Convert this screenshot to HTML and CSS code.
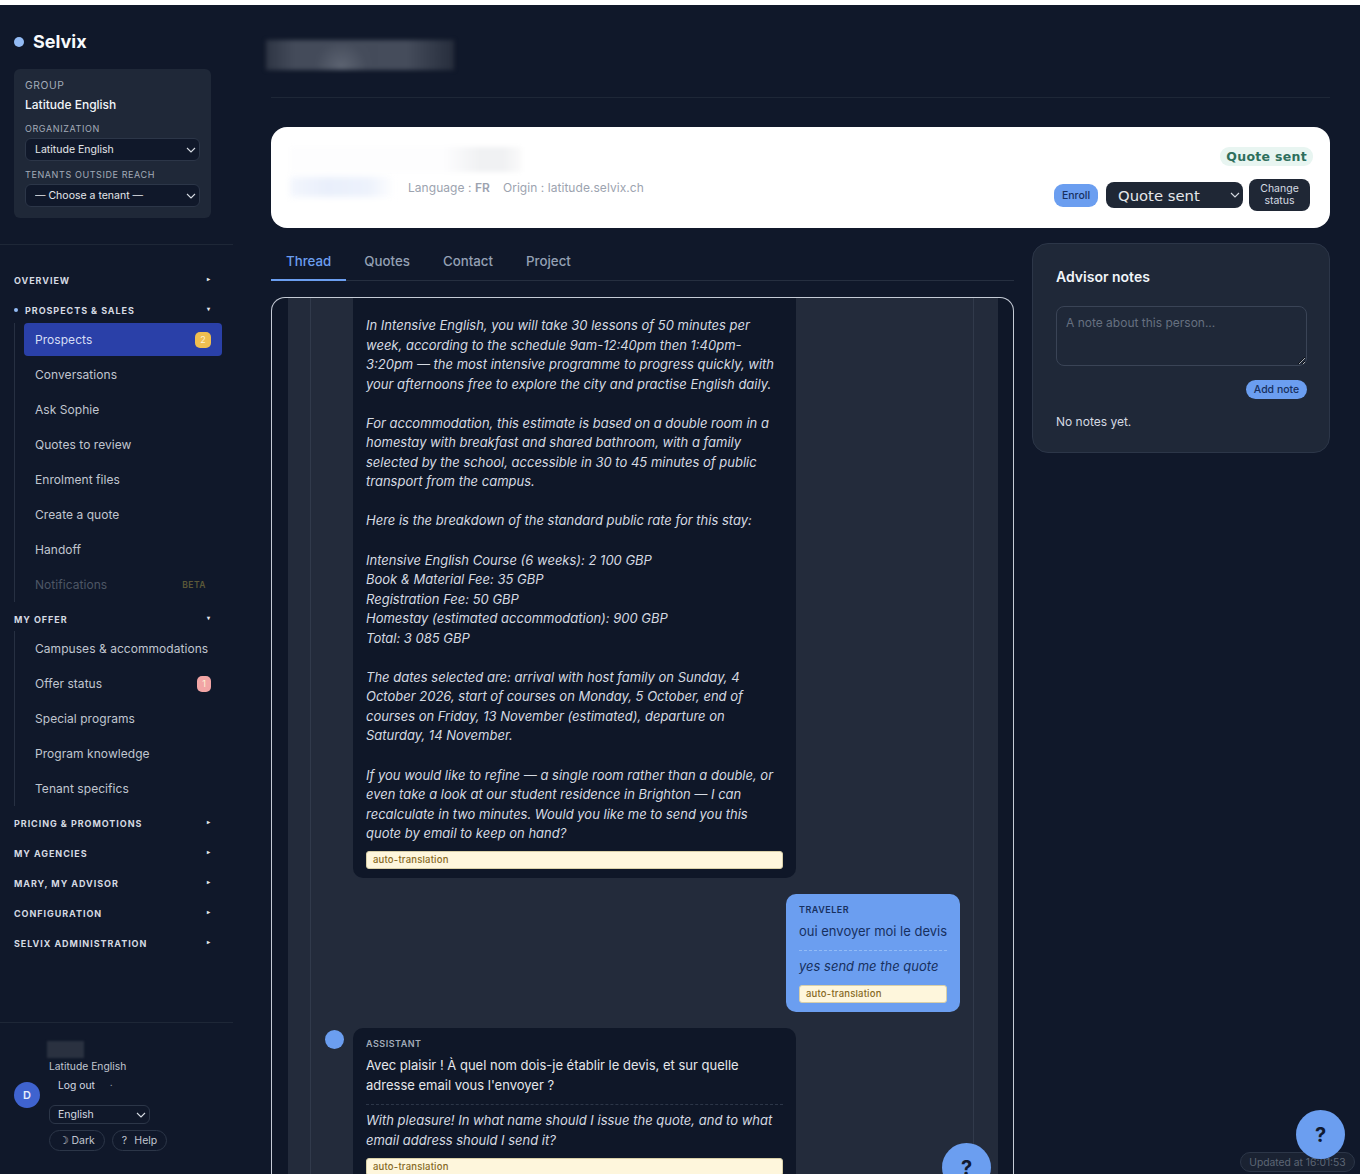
FILE: index.html
```html
<!DOCTYPE html>
<html lang="en">
<head>
    <meta charset="UTF-8">
    <meta name="viewport" content="width=device-width, initial-scale=1.0">
    <title>Selvix</title>
    <link rel="stylesheet" href="styles.css">
</head>
<body>
    <div class="top-strip"></div>
    <div class="app">
        <!-- Sidebar -->
        <aside class="sidebar">
            <div class="brand"><span class="brand-dot"></span>Selvix</div>

            <div class="tenant-card">
                <div class="tenant-label">GROUP</div>
                <div class="tenant-name">Latitude English</div>
                <div class="tenant-label small">ORGANIZATION</div>
                <select class="tenant-select"><option>Latitude English</option></select>
                <div class="tenant-label small">TENANTS OUTSIDE REACH</div>
                <select class="tenant-select"><option>— Choose a tenant —</option></select>
            </div>

            <nav class="nav">
                <div class="nav-head"><span>OVERVIEW</span><span class="caret">▸</span></div>
                <div class="nav-head current"><span class="head-dot"></span><span>PROSPECTS &amp; SALES</span><span class="caret">▾</span></div>
                <div class="nav-group">
                    <a class="nav-item active">Prospects<span class="badge yellow">2</span></a>
                    <a class="nav-item">Conversations</a>
                    <a class="nav-item">Ask Sophie</a>
                    <a class="nav-item">Quotes to review</a>
                    <a class="nav-item">Enrolment files</a>
                    <a class="nav-item">Create a quote</a>
                    <a class="nav-item">Handoff</a>
                    <a class="nav-item muted">Notifications<span class="beta">BETA</span></a>
                </div>
                <div class="nav-head"><span>MY OFFER</span><span class="caret">▾</span></div>
                <div class="nav-group offer">
                    <a class="nav-item">Campuses &amp; accommodations</a>
                    <a class="nav-item">Offer status<span class="badge pink">1</span></a>
                    <a class="nav-item">Special programs</a>
                    <a class="nav-item">Program knowledge</a>
                    <a class="nav-item">Tenant specifics</a>
                </div>
                <div class="nav-head"><span>PRICING &amp; PROMOTIONS</span><span class="caret">▸</span></div>
                <div class="nav-head"><span>MY AGENCIES</span><span class="caret">▸</span></div>
                <div class="nav-head"><span>MARY, MY ADVISOR</span><span class="caret">▸</span></div>
                <div class="nav-head"><span>CONFIGURATION</span><span class="caret">▸</span></div>
                <div class="nav-head"><span>SELVIX ADMINISTRATION</span><span class="caret">▸</span></div>
            </nav>

            <div class="user-box">
                <div class="avatar">D</div>
                <div class="user-info">
                    <div class="blur-name"></div>
                    <div class="user-org">Latitude English</div>
                    <div class="logout">Log out<span class="logout-dot">·</span></div>
                    <select class="lang-select"><option>English</option></select>
                    <div class="user-btns">
                        <button class="pill-btn"><span class="pill-icon">☽</span>Dark</button>
                        <button class="pill-btn"><span class="pill-icon">?</span>Help</button>
                    </div>
                </div>
            </div>
        </aside>

        <!-- Main -->
        <main class="main">
            <div class="page-head"><div class="blur-title"></div></div>

            <section class="contact-card">
                <div class="contact-left">
                    <div class="blur-contact"></div>
                    <div class="contact-meta">
                        <div class="blur-mail"></div>
                        <span>Language : <b>FR</b></span>
                        <span>Origin : latitude.selvix.ch</span>
                    </div>
                </div>
                <div class="contact-right">
                    <span class="status-pill">Quote sent</span>
                    <div class="contact-actions">
                        <button class="btn-enroll">Enroll</button>
                        <select class="status-select"><option>Quote sent</option></select>
                        <button class="btn-change">Change<br>status</button>
                    </div>
                </div>
            </section>

            <div class="columns">
                <div class="left-col">
                    <div class="tabs">
                        <a class="tab active">Thread</a>
                        <a class="tab">Quotes</a>
                        <a class="tab">Contact</a>
                        <a class="tab">Project</a>
                    </div>

                    <div class="thread">
                        <div class="thread-panel">
                            <div class="thread-inner">
                                <div class="msg first">
                                    <div class="bubble">
                                        <p class="translated">In Intensive English, you will take 30 lessons of 50 minutes per week, according to the schedule 9am-12:40pm then 1:40pm-3:20pm — the most intensive programme to progress quickly, with your afternoons free to explore the city and practise English daily.

For accommodation, this estimate is based on a double room in a homestay with breakfast and shared bathroom, with a family selected by the school, accessible in 30 to 45 minutes of public transport from the campus.

Here is the breakdown of the standard public rate for this stay:

Intensive English Course (6 weeks): 2 100 GBP
Book &amp; Material Fee: 35 GBP
Registration Fee: 50 GBP
Homestay (estimated accommodation): 900 GBP
Total: 3 085 GBP

The dates selected are: arrival with host family on Sunday, 4 October 2026, start of courses on Monday, 5 October, end of courses on Friday, 13 November (estimated), departure on Saturday, 14 November.

If you would like to refine — a single room rather than a double, or even take a look at our student residence in Brighton — I can recalculate in two minutes. Would you like me to send you this quote by email to keep on hand?</p>
                                        <div class="auto-tag">auto-translation</div>
                                    </div>
                                </div>

                                <div class="msg traveler">
                                    <div class="bubble blue">
                                        <div class="msg-role">TRAVELER</div>
                                        <p class="original">oui envoyer moi le devis</p>
                                        <p class="translated">yes send me the quote</p>
                                        <div class="auto-tag">auto-translation</div>
                                    </div>
                                </div>

                                <div class="msg">
                                    <span class="msg-avatar"></span>
                                    <div class="bubble">
                                        <div class="msg-role">ASSISTANT</div>
                                        <p class="original">Avec plaisir ! À quel nom dois-je établir le devis, et sur quelle adresse email vous l'envoyer ?</p>
                                        <p class="translated">With pleasure! In what name should I issue the quote, and to what email address should I send it?</p>
                                        <div class="auto-tag">auto-translation</div>
                                    </div>
                                </div>
                            </div>
                        </div>
                    </div>
                </div>

                <aside class="notes">
                    <h3>Advisor notes</h3>
                    <textarea placeholder="A note about this person..."></textarea>
                    <div class="notes-actions"><button class="btn-note">Add note</button></div>
                    <p class="no-notes">No notes yet.</p>
                </aside>
            </div>
        </main>
    </div>

    <div class="updated">Updated at 16:01:53</div>
    <button class="fab fab-thread">?</button>
    <button class="fab fab-page">?</button>
</body>
</html>
```

FILE: styles.css
```css
* {
    box-sizing: border-box;
}
html, body {
    height: 1174px;
    margin: 0;
    overflow: hidden;
}
body {
    background: #10182a;
    color: #e5e7eb;
    font-family: Inter, "Liberation Sans", sans-serif;
}
p {
    margin: 0;
}
button {
    font-family: inherit;
    cursor: pointer;
}
select {
    appearance: none;
    background-image: url("data:image/svg+xml,%3Csvg xmlns='http://www.w3.org/2000/svg' width='10' height='6' viewBox='0 0 10 6'%3E%3Cpath d='M1 1l4 4 4-4' fill='none' stroke='%23d5dae2' stroke-width='1.1'/%3E%3C/svg%3E");
    background-repeat: no-repeat;
    background-position: right 3px center;
}
.top-strip {
    height: 5px;
    background: #fff;
}
.app {
    display: flex;
    height: 1169px;
}

/* sidebar */
.sidebar {
    width: 233px;
    flex: none;
    display: flex;
    flex-direction: column;
}
.brand {
    display: flex;
    align-items: center;
    gap: 9px;
    padding: 9px 14px 0;
    height: 64px;
    font-size: 18px;
    font-weight: 700;
    color: #f8fafc;
}
.brand-dot {
    width: 10px;
    height: 10px;
    border-radius: 50%;
    background: #93bbf5;
}
.tenant-card {
    width: 197px;
    height: 149px;
    margin-left: 14px;
    padding: 10px 11px;
    border-radius: 6px;
    background: #1f2838;
}
.tenant-label {
    font-size: 10.3px;
    line-height: 13px;
    letter-spacing: 0.6px;
    color: #a3acb9;
}
.tenant-label.small {
    font-size: 9px;
    margin: 7px 0 3px;
}
.tenant-name {
    font-size: 12px;
    line-height: 20px;
    margin-top: 3px;
    font-weight: 500;
    color: #f1f5f9;
}
.tenant-select {
    display: block;
    width: 175px;
    height: 23px;
    margin-bottom: 1px;
    padding-left: 9px;
    font: 10.5px Inter, sans-serif;
    color: #e5e7eb;
    background-color: #10182a;
    border: 1px solid #2c3648;
    border-radius: 6px;
}
.nav {
    margin-top: 26px;
    padding-top: 20px;
    border-top: 1px solid #1e2737;
}
.nav-head {
    display: flex;
    align-items: center;
    height: 30px;
    width: 211px;
    margin-left: 14px;
    font-size: 9px;
    font-weight: 700;
    letter-spacing: 0.95px;
    color: #d5dae2;
}
.caret {
    margin-left: auto;
    margin-top: -3px;
    padding-right: 15px;
    font-size: 6px;
    letter-spacing: 0;
    color: #e5e7eb;
}
.head-dot {
    width: 4px;
    height: 4px;
    margin-right: 7px;
    border-radius: 50%;
    background: #93bbf5;
}
.nav-group {
    margin-left: 14px;
    padding-left: 9px;
    border-left: 1px solid #273042;
    width: 208px;
    margin-top: -2px;
    margin-bottom: 2px;
}
.nav-group.offer {
    margin-top: -3px;
}
.nav-item {
    display: flex;
    align-items: center;
    justify-content: space-between;
    height: 35px;
    padding: 0 11px;
    font-size: 12px;
    letter-spacing: 0.05px;
    color: #c0c6d0;
}
.nav-item.active {
    height: 33px;
    margin-bottom: 1px;
    border-radius: 4px;
    background: #2a40a8;
    color: #d6def5;
}
.nav-item.muted {
    color: #4d5665;
}
.badge {
    width: 16px;
    height: 16px;
    border-radius: 5px;
    font-size: 9px;
    line-height: 16px;
    text-align: center;
    color: #fdf3d4;
}
.badge.yellow {
    background: #f0bf50;
}
.badge.pink {
    width: 14px;
    background: #f2a5a5;
}
.beta {
    padding: 2px 5px 2px 0;
    font-size: 8.5px;
    font-weight: 600;
    letter-spacing: 0.5px;
    color: #5c5838;
}
.user-box {
    display: flex;
    align-items: center;
    gap: 9px;
    margin-top: auto;
    padding: 18px 0 23px 14px;
    border-top: 1px solid #1e2737;
}
.avatar {
    width: 26px;
    height: 26px;
    margin-bottom: 2px;
    border-radius: 50%;
    background: #3f63cf;
    color: #e8eefc;
    font-size: 11px;
    font-weight: 600;
    line-height: 26px;
    text-align: center;
}
.user-info {
    flex: 1;
}
.blur-name {
    width: 37px;
    height: 17px;
    margin-left: -2px;
    background: #2a3140;
    filter: blur(1px);
}
.user-org {
    margin-top: 1px;
    font-size: 10.3px;
    line-height: 14px;
    color: #c0c6d0;
}
.logout {
    margin-top: 5px;
    padding-left: 9px;
    font-size: 10.3px;
    line-height: 14px;
    color: #d5dae2;
}
.logout-dot {
    margin-left: 15px;
    color: #9ca3af;
}
.lang-select {
    display: block;
    width: 101px;
    height: 19px;
    margin-top: 13px;
    padding-left: 8px;
    font: 10.5px Inter, sans-serif;
    color: #d5dae2;
    background-color: #10182a;
    border: 1px solid #2c3648;
    border-radius: 6px;
}
.user-btns {
    display: flex;
    gap: 7px;
    margin-top: 6px;
}
.pill-btn {
    height: 21px;
    padding: 0 9px;
    font-size: 10.5px;
    color: #c0c6d0;
    background: none;
    border: 1px solid #2c3648;
    border-radius: 11px;
}
.pill-icon {
    display: inline-block;
    width: 12.5px;
    text-align: left;
}

/* main */
.main {
    flex: 1;
    min-width: 0;
    padding: 0 30px 0 38px;
}
.page-head {
    height: 93px;
    padding-top: 35px;
    border-bottom: 1px solid #1e2737;
}
.blur-title {
    width: 188px;
    height: 30px;
    margin-left: -5px;
    background: radial-gradient(circle at 40% 90%, #5d6472, transparent 22%), linear-gradient(90deg, #2e3544, #444b5a 15%, #454c5b 75%, #262d3c);
    filter: blur(2px);
}
.contact-card {
    display: flex;
    justify-content: space-between;
    height: 101px;
    margin-top: 29px;
    padding: 20px 20px 0 19px;
    border-radius: 16px;
    background: #fff;
}
.blur-contact {
    width: 232px;
    height: 25px;
    background: linear-gradient(90deg, #fdfdfe 66%, #f0f1f3 82%, #f0f1f3 92%, #fbfbfb);
    filter: blur(2px);
}
.contact-meta {
    display: flex;
    align-items: center;
    gap: 13px;
    margin-top: 5px;
    font-size: 12px;
    letter-spacing: 0.05px;
    color: #9ca3af;
}
.blur-mail {
    width: 105px;
    height: 20px;
    background: linear-gradient(90deg, #f3f6fd, #e9effb 35%, #edf2fc 75%, #fff);
    filter: blur(3px);
}
.contact-meta b {
    font-weight: 600;
}
.contact-right {
    display: flex;
    flex-direction: column;
    align-items: flex-end;
}
.status-pill {
    margin-right: -3px;
    padding: 1px 6px;
    border-radius: 9px;
    background: #e8f5f1;
    color: #2e6f5c;
    font-family: "DejaVu Sans", sans-serif;
    font-size: 12.5px;
    font-weight: 700;
    letter-spacing: 0.3px;
    line-height: 17px;
}
.contact-actions {
    display: flex;
    align-items: center;
    gap: 8px;
    margin-top: 13px;
}
.btn-enroll {
    width: 44px;
    height: 23px;
    padding: 0;
    border: 0;
    border-radius: 9px;
    background: #6b9ef0;
    color: #17305f;
    font-size: 10.5px;
    font-weight: 500;
}
.status-select {
    width: 137px;
    height: 26px;
    padding-left: 12px;
    margin-right: -2px;
    border: 0;
    border-radius: 8px;
    background-color: #1f2735;
    color: #e5e7eb;
    font: 14.8px "DejaVu Sans", sans-serif;
}
.btn-change {
    width: 61px;
    height: 32px;
    padding: 0;
    border: 0;
    border-radius: 8px;
    background: #1f2735;
    color: #d5dae2;
    font-size: 10.5px;
    line-height: 12px;
}
.columns {
    display: flex;
    gap: 18px;
    margin-top: 15px;
}
.left-col {
    width: 743px;
    flex: none;
}
.tabs {
    display: flex;
    gap: 3px;
    height: 38px;
    border-bottom: 1px solid #262f40;
}
.tab {
    height: 38px;
    padding: 0 15px;
    font-size: 13.3px;
    font-weight: 500;
    line-height: 36px;
    color: #94a0b4;
}
.tab.active {
    color: #6b9ef0;
    border-bottom: 2px solid #6b9ef0;
}

/* thread */
.thread {
    height: 900px;
    margin-top: 16px;
    padding: 0 15px 0 16px;
    border: 1px solid #c5cbd6;
    border-bottom: 0;
    border-radius: 14px 14px 0 0;
    background: #0f1728;
    overflow: hidden;
}
.thread-panel {
    height: 100%;
    padding: 0 24px 0 22px;
    background: #232b3b;
}
.thread-inner {
    height: 100%;
    padding: 0 13px 0 14px;
    border-left: 1px solid #313a4b;
    border-right: 1px solid #313a4b;
}
.msg {
    display: flex;
    gap: 9px;
    margin-bottom: 16px;
}
.msg.first {
    padding-left: 28px;
}
.msg.traveler {
    justify-content: flex-end;
}
.msg-avatar {
    width: 19px;
    height: 19px;
    flex: none;
    margin-top: 2px;
    border-radius: 50%;
    background: #6b9ef0;
}
.bubble {
    width: 443px;
    padding: 8px 13px 10px;
    border-radius: 10px;
    background: #0f1728;
}
.first .bubble {
    padding-top: 18px;
    padding-bottom: 9px;
    border-radius: 0 0 10px 10px;
}
.bubble.blue {
    width: 174px;
    padding-bottom: 9px;
    background: #6b9ef0;
    color: #17305f;
}
.msg-role {
    font-size: 9px;
    font-weight: 600;
    letter-spacing: 0.5px;
    line-height: 15px;
    color: #a3acb9;
}
.blue .msg-role {
    color: #17305f;
}
.original {
    margin-top: 5px;
    padding-bottom: 9px;
    border-bottom: 1px dashed #2c3648;
    font-size: 13px;
    line-height: 19.6px;
    color: #e5e7eb;
}
.blue .original {
    white-space: nowrap;
    color: #17305f;
    border-bottom-color: #93bbf5;
}
.translated {
    white-space: pre-line;
    font-size: 13px;
    font-style: italic;
    line-height: 19.6px;
    color: #d5dae2;
}
.first .translated {
    line-height: 19.55px;
}
.first .auto-tag {
    margin-top: 7px;
}
.original + .translated {
    margin-top: 6px;
}
.blue .translated {
    color: #17305f;
}
.auto-tag {
    height: 18px;
    margin-top: 8px;
    padding-left: 6px;
    border: 1px solid #d8cfa8;
    border-radius: 3px;
    background: #fef6dc;
    color: #86691f;
    font-size: 9.5px;
    font-weight: 500;
    letter-spacing: 0.2px;
    line-height: 16px;
}

/* notes */
.notes {
    width: 298px;
    height: 210px;
    padding: 24px 22px 0 23px;
    border: 1px solid #2c3648;
    border-radius: 16px;
    background: #1f2838;
}
.notes h3 {
    margin: 0 0 20px;
    font-size: 14px;
    font-weight: 600;
    line-height: 18px;
    color: #f1f5f9;
}
.notes textarea {
    display: block;
    width: 251px;
    height: 60px;
    padding: 8px 9px;
    border: 1px solid #3a4456;
    border-radius: 8px;
    background: #1f2838;
    color: #e5e7eb;
    font: 12px Inter, sans-serif;
}
.notes textarea::placeholder {
    color: #667080;
}
.notes-actions {
    display: flex;
    justify-content: flex-end;
    margin-top: 14px;
}
.btn-note {
    width: 61px;
    height: 19px;
    padding: 0;
    border: 0;
    border-radius: 10px;
    background: #6b9ef0;
    color: #17305f;
    font-size: 10.5px;
    font-weight: 500;
}
.no-notes {
    margin-top: 15px;
    font-size: 12px;
    line-height: 16px;
    color: #d5dae2;
}

/* floating */
.fab {
    position: fixed;
    width: 49px;
    height: 49px;
    padding: 0;
    border: 0;
    border-radius: 50%;
    background: #6b9ef0;
    color: #111a30;
    font-size: 20px;
    font-weight: 700;
}
.fab-thread {
    left: 942px;
    top: 1143px;
}
.fab-page {
    left: 1296px;
    top: 1110px;
}
.updated {
    position: fixed;
    left: 1240px;
    top: 1152px;
    width: 115px;
    height: 20px;
    border: 1px solid #2c3648;
    border-radius: 10px;
    background: #1a2232;
    color: #5d6675;
    font-size: 10.3px;
    line-height: 18px;
    text-align: center;
}
```
